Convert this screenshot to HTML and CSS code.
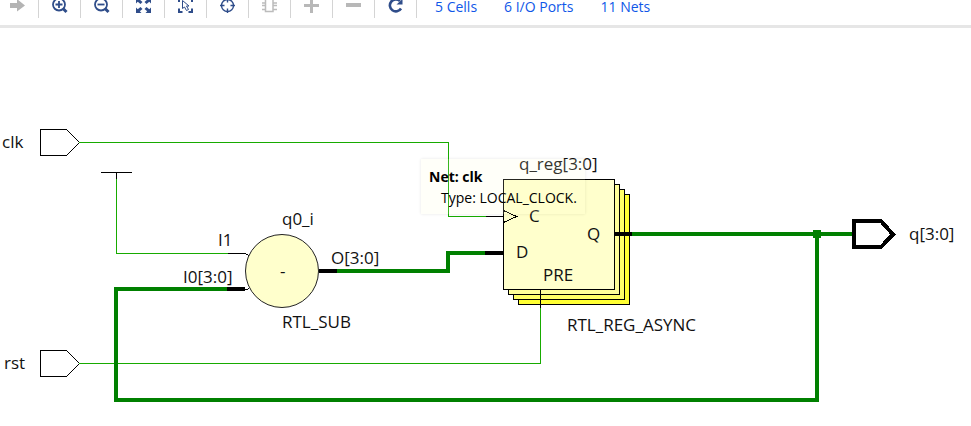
FILE: index.html
```html
<!DOCTYPE html>
<html lang="en">
<head>
<meta charset="utf-8">
<title>Schematic</title>
<link rel="stylesheet" href="styles.css">
</head>
<body>
<header class="toolbar">
  <button class="tool" aria-label="Next" disabled><svg class="icon" viewBox="0 0 20 18"><path fill="#b4b4b4" d="M3 3h7v-4l8 6.500-8 6V8H3z"/></svg></button>
  <button class="tool" aria-label="Zoom in"><svg class="icon" viewBox="0 0 20 18"><g fill="none" stroke="#2f4d8a"><circle cx="9" cy="4.500" r="6" stroke-width="1.800"/><path stroke-width="1.800" d="M5.500 4.500h7M9 1v7"/><path stroke-width="3" d="M13 8.500l3.500 3.500"/></g></svg></button>
  <button class="tool" aria-label="Zoom out"><svg class="icon" viewBox="0 0 20 18"><g fill="none" stroke="#2f4d8a"><circle cx="9" cy="4.500" r="6" stroke-width="1.800"/><path stroke-width="1.800" d="M5.500 4.500h7"/><path stroke-width="3" d="M13 8.500l3.500 3.500"/></g></svg></button>
  <button class="tool" aria-label="Zoom fit"><svg class="icon" viewBox="0 0 20 18"><path fill="#2f4d8a" d="M2 7.500V13h5.500l-1.700-1.700L8.500 9 6.500 7 3.700 9.200zM17 7.500V13h-5.500l1.700-1.700L10.500 9l2-2 2.800 2.200zM2 3.500V-2h5.500L5.800-.3 8.500 2l-2 2-2.800-2.200zM17 3.500V-2h-5.500l1.700 1.700L10.500 2l2 2 2.800-2.200z"/></svg></button>
  <button class="tool" aria-label="Zoom to selection"><svg class="icon" viewBox="0 0 20 18"><path fill="none" stroke="#2f4d8a" stroke-width="2" d="M3 8.500V12h3.500M12.500 12H16V8.500M3 2v-4M16 2v-4"/><path fill="#fff" stroke="#2f4d8a" d="M6.500 .5v8l2-1.500 2 3.500 2-1-2-3.500h2.500z"/></svg></button>
  <button class="tool" aria-label="Center selection"><svg class="icon" viewBox="0 0 20 18"><g fill="none" stroke="#2f4d8a" stroke-width="1.400"><circle cx="9.500" cy="5.500" r="6"/><path d="M2 5.500h4.500M12.500 5.500H17M9.500 8.500V13M9.500-2v4.500"/></g></svg></button>
  <button class="tool" aria-label="Cell pins" disabled><svg class="icon" viewBox="0 0 20 18"><path fill="none" stroke="#bcbcbc" stroke-width="1.500" d="M5.500-2h7.500v13.500H5.500zM2 3H5.500M2 5.500H5.500M2 9.500H5.500M13 3h4M13 5.500h4M13 9.500h4"/></svg></button>
  <button class="tool" aria-label="Add" disabled><svg class="icon" viewBox="0 0 20 18"><path fill="#b8b8b8" d="M2 4h15v3H2zM8-2h3v15H8z"/></svg></button>
  <button class="tool" aria-label="Remove" disabled><svg class="icon" viewBox="0 0 20 18"><path fill="#b8b8b8" d="M2 3h15v4H2z"/></svg></button>
  <button class="tool" aria-label="Reload"><svg class="icon" viewBox="0 0 20 18"><path fill="none" stroke="#2f4d8a" stroke-width="2.600" d="M14 1A6 6 0 1 0 15 8.500"/><path fill="#2f4d8a" d="M16.500-1v5.500h-6z"/></svg></button>
  <nav class="stats">
    <a href="#cells">5 Cells</a>
    <a href="#ports">6 I/O Ports</a>
    <a href="#nets">11 Nets</a>
  </nav>
</header>
<main class="canvas">
  <svg class="schematic" viewBox="0 28 971 398" role="img" aria-label="Schematic">
    <g class="pin">
      <path d="M40.500 129.500h26l13 13-13 13h-26zM40.500 350.500h26l13 13-13 13h-26z"/>
      <path d="M101 172.500h31M116.500 172v8M228 253.500h17l4 2M244 290.500l5-2"/>
    </g>
    <g class="net">
      <path d="M79 142.500H448.500V216.500H486"/>
      <path d="M116.500 179V253.500H228"/>
      <path d="M79 363.500H540.500V308"/>
    </g>
    <g class="bus">
      <path d="M228 289H116V400H817V234M632 234H853M337 271H448V253H486"/>
      <path class="junction" d="M813 230h8v8h-8z"/>
    </g>
    <circle class="cell" cx="282" cy="271" r="36.500"/>
    <g class="register">
      <path class="layer-4" d="M518.500 194.500h111v110h-111z"/>
      <path class="layer-3" d="M513.500 189.500h111v110h-111z"/>
      <path class="layer-2" d="M508.500 184.500h111v110h-111z"/>
      <path class="layer-1" d="M503.500 179.500h111v110h-111z"/>
    </g>
    <g class="pin">
      <path d="M486 216.500h17M503.500 210.500l13 6-13 6M540.500 290v18"/>
      <path class="bus-pin" d="M227 289h18M319 271h18M485 253h18M615 234h17"/>
    </g>
    <path class="out-port" d="M854 221h27l12 13.500-12 12.500h-27z"/>
    <g class="label">
      <text x="2" y="148">clk</text>
      <text x="4" y="369">rst</text>
      <text x="218" y="246">I1</text>
      <text x="183" y="283">I0[3:0]</text>
      <text x="282" y="225">q0_i</text>
      <text x="280" y="277">-</text>
      <text x="282" y="328">RTL_SUB</text>
      <text x="331" y="264">O[3:0]</text>
      <text x="519" y="170">q_reg[3:0]</text>
      <text x="529" y="222">C</text>
      <text x="516" y="258">D</text>
      <text x="543" y="281">PRE</text>
      <text x="587" y="240">Q</text>
      <text x="567" y="331">RTL_REG_ASYNC</text>
      <text x="909" y="240">q[3:0]</text>
    </g>
  </svg>
  <div class="tooltip" role="tooltip">
    <strong>Net: clk</strong>
    <span class="detail">Type: LOCAL_CLOCK.</span>
  </div>
</main>
</body>
</html>
```
FILE: styles.css
```css
body {
  margin: 0;
  background: #fff;
  color: #000;
  font-family: "Open Sans", "Noto Sans", sans-serif;
}

.toolbar {
  display: flex;
  align-items: flex-start;
  padding-bottom: 7px;
  border-bottom: 3px solid #e6e6e6;
}

.tool {
  box-sizing: border-box;
  width: 42px;
  height: 18px;
  padding: 0;
  border: 0;
  border-right: 1px solid #d4d4d4;
  background: none;
}

.tool:first-child {
  width: 39px;
  padding-right: 4px;
}

.icon {
  display: block;
  width: 20px;
  height: 18px;
  margin: 0 auto;
}

.stats {
  display: flex;
  gap: 27px;
  margin-left: 18px;
  font-size: 14px;
  line-height: 14px;
}

.stats a {
  color: #0f57e8;
  text-decoration: none;
}

.canvas {
  position: relative;
}

.schematic {
  display: block;
  width: 100%;
  height: auto;
  shape-rendering: crispEdges;
}

.pin path {
  fill: none;
  stroke: #000;
}

.pin .bus-pin {
  stroke-width: 4px;
}

.net path {
  fill: none;
  stroke: #17ab00;
}

.bus path {
  fill: none;
  stroke: #008000;
  stroke-width: 4px;
}

.bus .junction {
  fill: #008000;
  stroke: none;
}

.cell {
  fill: #ffffcc;
  stroke: #222;
  shape-rendering: auto;
}

.register path {
  stroke: #000;
}

.layer-1 { fill: #ffffcc; }
.layer-2 { fill: #ffff99; }
.layer-3 { fill: #ffff66; }
.layer-4 { fill: #ffff33; }

.out-port {
  fill: #fff;
  stroke: #000;
  stroke-width: 4px;
}

.label {
  fill: #111;
  font-size: 17px;
}

.tooltip {
  position: absolute;
  top: 131px;
  left: 421px;
  box-sizing: border-box;
  display: flex;
  flex-direction: column;
  padding: 7px 8px 6px;
  background: rgba(255, 255, 215, 0.15);
  box-shadow: 0 0 3px rgba(0, 0, 0, 0.1);
  font-size: 14px;
  line-height: 21px;
  white-space: nowrap;
}

.detail {
  padding-left: 12px;
}
```
